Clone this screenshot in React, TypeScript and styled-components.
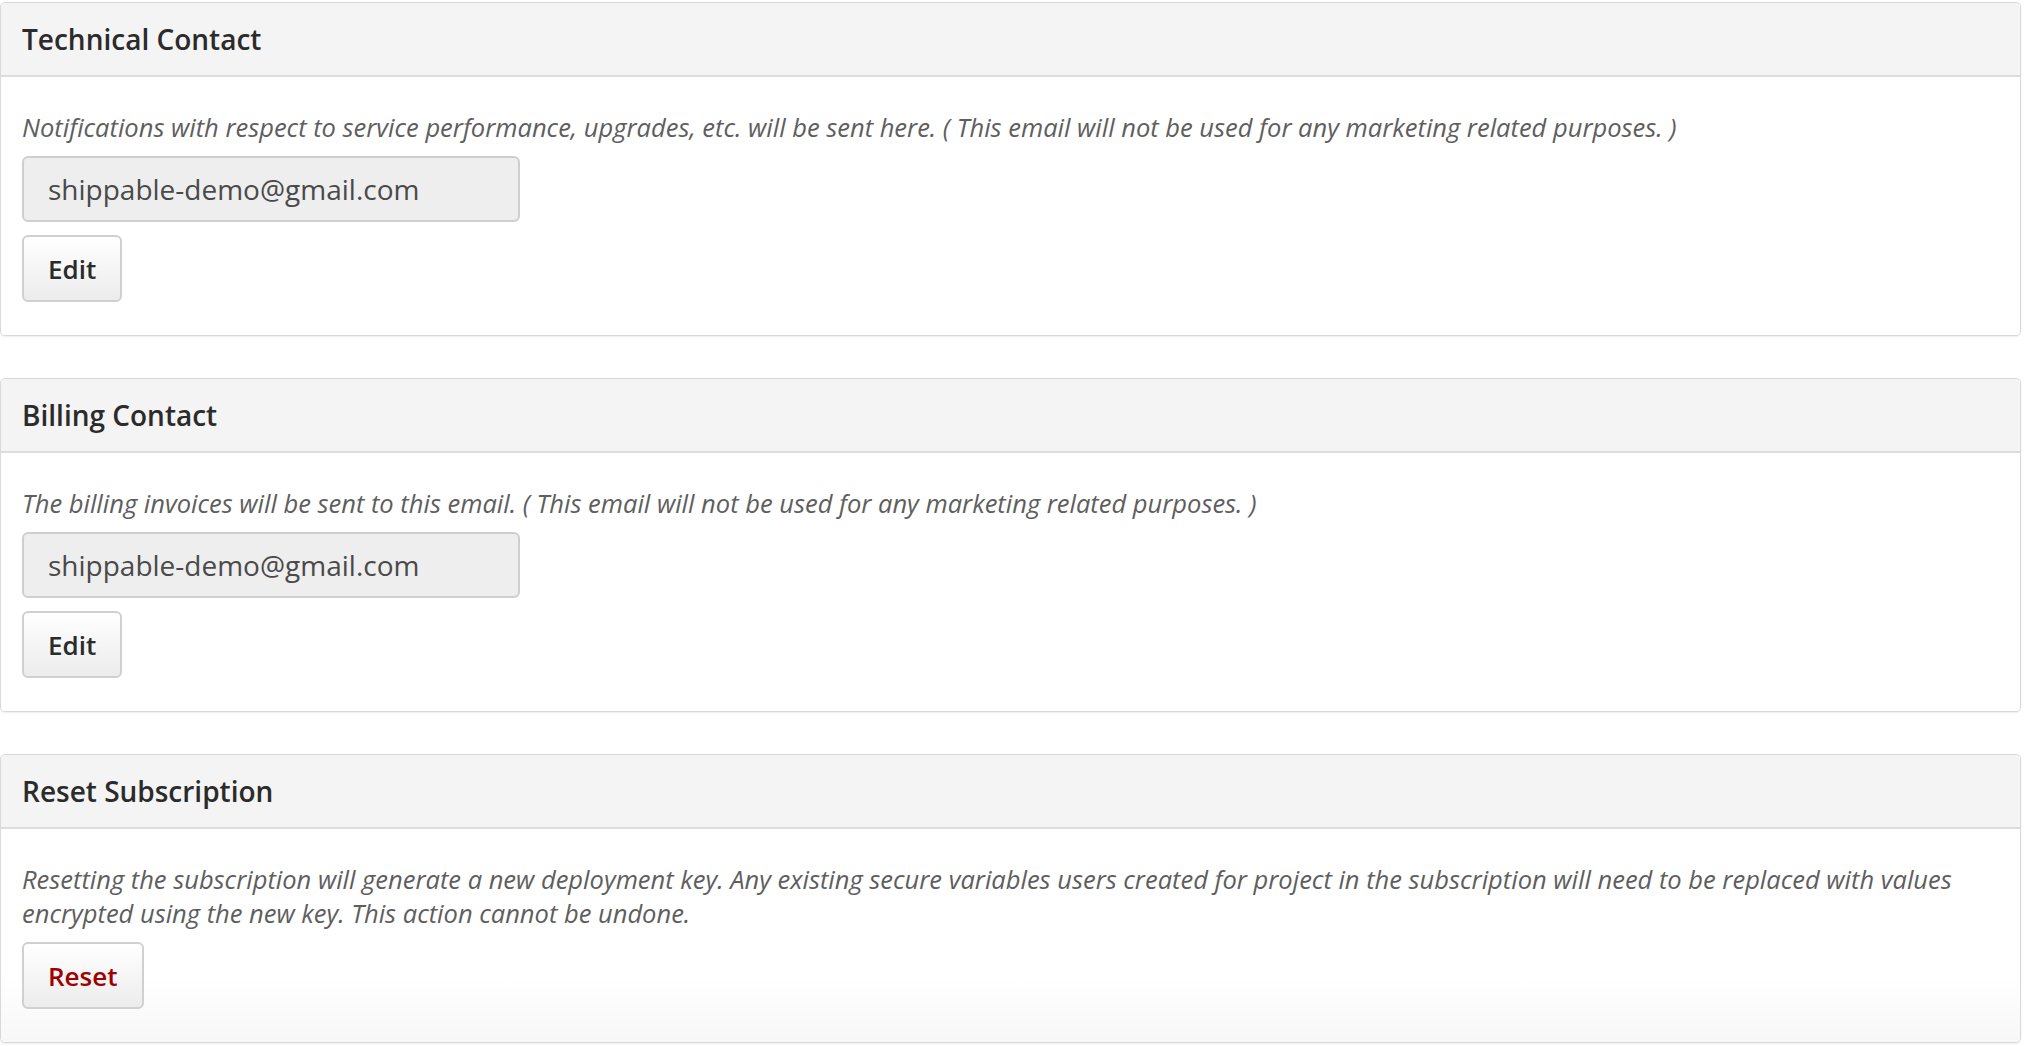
import styled, { createGlobalStyle } from 'styled-components';

const GlobalStyle = createGlobalStyle`
    html, body {
        margin: 0;
        padding: 0;
        background: #fff;
    }

    body {
        font-family: "Open Sans", "Noto Sans", sans-serif;
        color: #333;
    }
`;

const Page = styled.div`
    display: flex;
    flex-direction: column;
    gap: 42px;
    padding: 2px 3px 2px 0;
`;

const Panel = styled.section`
    background: #fff;
    border: 1px solid #d9d9d9;
    border-radius: 5px;
    box-shadow: 0 1px 2px rgba(0, 0, 0, 0.08);
    overflow: hidden;
`;

const PanelHeading = styled.div`
    display: flex;
    align-items: center;
    height: 74px;
    padding: 0 21px;
    background: #f4f4f4;
    border-bottom: 2px solid #dcdcdc;
    box-sizing: border-box;
`;

const PanelTitle = styled.h3`
    margin: 0;
    font-size: 28px;
    font-weight: 600;
    color: #2b2b2b;
`;

const PanelBody = styled.div<{ $fade?: boolean }>`
    padding: 33px 21px 33px;
    background: ${({ $fade }) => ($fade ? 'linear-gradient(to bottom, #fff 70%, #f7f7f7 100%)' : '#fff')};
`;

const Hint = styled.p`
    margin: 0 0 12px;
    font-size: 25.5px;
    line-height: 34px;
    font-style: italic;
    color: #5e5e5e;
`;

const EmailField = styled.div`
    display: flex;
    align-items: center;
    width: 498px;
    height: 66px;
    padding: 0 24px;
    margin-bottom: 13px;
    box-sizing: border-box;
    background: #eee;
    border: 2px solid #cfcfcf;
    border-radius: 6px;
    font-size: 28px;
    color: #4a4a4a;
`;

const Button = styled.button<{ $danger?: boolean }>`
    display: block;
    height: 67px;
    padding: 0 24px;
    font-family: inherit;
    font-size: 26px;
    font-weight: 600;
    color: ${({ $danger }) => ($danger ? '#a00000' : '#2b2b2b')};
    background: linear-gradient(to bottom, #fff 0%, #ececec 100%);
    border: 2px solid #d0d0d0;
    border-radius: 6px;
    cursor: pointer;
`;

interface ContactProps {
    title: string;
    hint: string;
    email: string;
}

const ContactPanel = ({ title, hint, email }: ContactProps) => (
    <Panel>
        <PanelHeading>
            <PanelTitle>{title}</PanelTitle>
        </PanelHeading>
        <PanelBody>
            <Hint>{hint}</Hint>
            <EmailField>{email}</EmailField>
            <Button>Edit</Button>
        </PanelBody>
    </Panel>
);

const App = () => {
    return (
        <>
            <GlobalStyle />
            <Page>
                <ContactPanel
                    title="Technical Contact"
                    hint="Notifications with respect to service performance, upgrades, etc. will be sent here. ( This email will not be used for any marketing related purposes. )"
                    email="shippable-demo@gmail.com"
                />
                <ContactPanel
                    title="Billing Contact"
                    hint="The billing invoices will be sent to this email. ( This email will not be used for any marketing related purposes. )"
                    email="shippable-demo@gmail.com"
                />
                <Panel>
                    <PanelHeading>
                        <PanelTitle>Reset Subscription</PanelTitle>
                    </PanelHeading>
                    <PanelBody $fade>
                        <Hint>
                            Resetting the subscription will generate a new deployment key. Any existing secure variables users created for project in the subscription will need to be replaced with values encrypted using the new key. This action cannot be undone.
                        </Hint>
                        <Button $danger>Reset</Button>
                    </PanelBody>
                </Panel>
            </Page>
        </>
    );
};

export default App;
